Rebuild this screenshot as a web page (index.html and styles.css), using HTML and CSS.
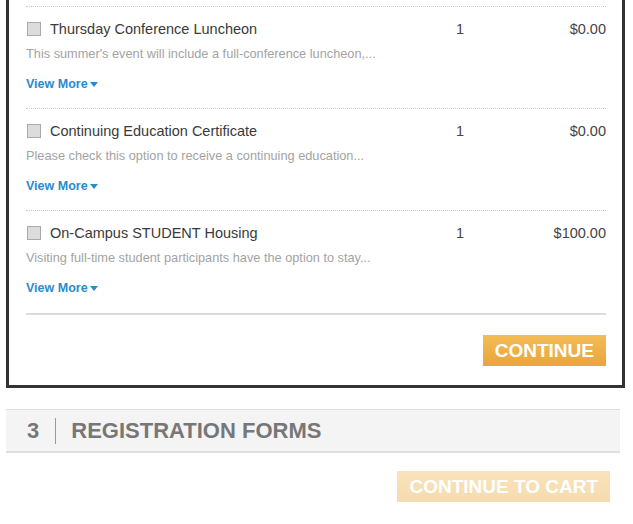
FILE: index.html
```html
<!DOCTYPE html>
<html>
<head>
<meta charset="utf-8">
<link rel="stylesheet" href="styles.css">
</head>
<body>
<div class="panel">
  <div class="item">
    <div class="item-top">
      <label class="item-name"><span class="check"></span>Thursday Conference Luncheon</label>
      <span class="qty">1</span>
      <span class="price">$0.00</span>
    </div>
    <p class="desc">This summer's event will include a full-conference luncheon,...</p>
    <a class="more" href="#">View More<span class="caret"></span></a>
  </div>
  <div class="item">
    <div class="item-top">
      <label class="item-name"><span class="check"></span>Continuing Education Certificate</label>
      <span class="qty">1</span>
      <span class="price">$0.00</span>
    </div>
    <p class="desc">Please check this option to receive a continuing education...</p>
    <a class="more" href="#">View More<span class="caret"></span></a>
  </div>
  <div class="item item-last">
    <div class="item-top">
      <label class="item-name"><span class="check"></span>On-Campus STUDENT Housing</label>
      <span class="qty">1</span>
      <span class="price">$100.00</span>
    </div>
    <p class="desc">Visiting full-time student participants have the option to stay...</p>
    <a class="more" href="#">View More<span class="caret"></span></a>
  </div>
  <div class="actions">
    <button class="btn">CONTINUE</button>
  </div>
</div>

<div class="step">
  <span class="step-num">3</span>
  <span class="step-title">REGISTRATION FORMS</span>
</div>

<div class="cart-actions">
  <button class="btn btn-disabled">CONTINUE TO CART</button>
</div>
</body>
</html>
```

FILE: styles.css
```css
html, body {
  margin: 0;
  padding: 0;
  background: #fff;
  font-family: "Liberation Sans", Arial, Helvetica, sans-serif;
  color: #444;
}

.panel {
  width: 619px;
  box-sizing: border-box;
  margin-left: 6px;
  border: 3px solid #333;
  border-top: 0;
  padding: 6px 16px 19px 17px;
}

.item {
  border-top: 1px dotted #c8c8c8;
  padding: 14px 0 16px;
}

.item-last {
  padding-bottom: 17px;
}

.item-top {
  display: flex;
  align-items: center;
  height: 16px;
  font-size: 14.5px;
  line-height: 16px;
}

.item-name {
  flex: 1;
  display: flex;
  align-items: center;
  color: #3a3a3a;
}

.check {
  width: 12px;
  height: 12px;
  border: 1px solid #a9a9a9;
  background: #dcdcdc;
  margin: 0 9px 0 1px;
}

.qty {
  width: 80px;
}

.price {
  width: 70px;
  text-align: right;
}

.desc {
  margin: 9px 0 0;
  font-size: 12.75px;
  line-height: 16px;
  color: #a3a3a3;
}

.more {
  display: inline-flex;
  align-items: center;
  margin-top: 14px;
  font-size: 12.5px;
  line-height: 16px;
  font-weight: bold;
  color: #2a8bcc;
  text-decoration: none;
}

.caret {
  width: 0;
  height: 0;
  margin-left: 2px;
  border-left: 4px solid transparent;
  border-right: 4px solid transparent;
  border-top: 5px solid #2a8bcc;
}

.actions {
  border-top: 2px solid #dcdcdc;
  padding-top: 20px;
  display: flex;
  justify-content: flex-end;
}

.btn {
  height: 31px;
  padding: 0 12px;
  border: 0;
  background: linear-gradient(#f3bc56, #e8a63b);
  color: #fff;
  font-family: "Liberation Sans", Arial, sans-serif;
  font-weight: bold;
  font-size: 19px;
  line-height: 31px;
  cursor: pointer;
}

.btn-disabled {
  opacity: 0.4;
}

.step {
  width: 614px;
  box-sizing: border-box;
  margin: 21px 0 0 6px;
  height: 44px;
  background: #f4f4f4;
  border-top: 1px solid #dedede;
  border-bottom: 2px solid #dedede;
  display: flex;
  align-items: center;
  padding-left: 21px;
  color: #777;
  font-weight: bold;
  font-size: 22px;
}

.step-num {
  padding-right: 16px;
  border-right: 1px solid #999;
  line-height: 26px;
}

.step-title {
  padding-left: 15px;
}

.cart-actions {
  width: 610px;
  margin-top: 18px;
  display: flex;
  justify-content: flex-end;
}
```
